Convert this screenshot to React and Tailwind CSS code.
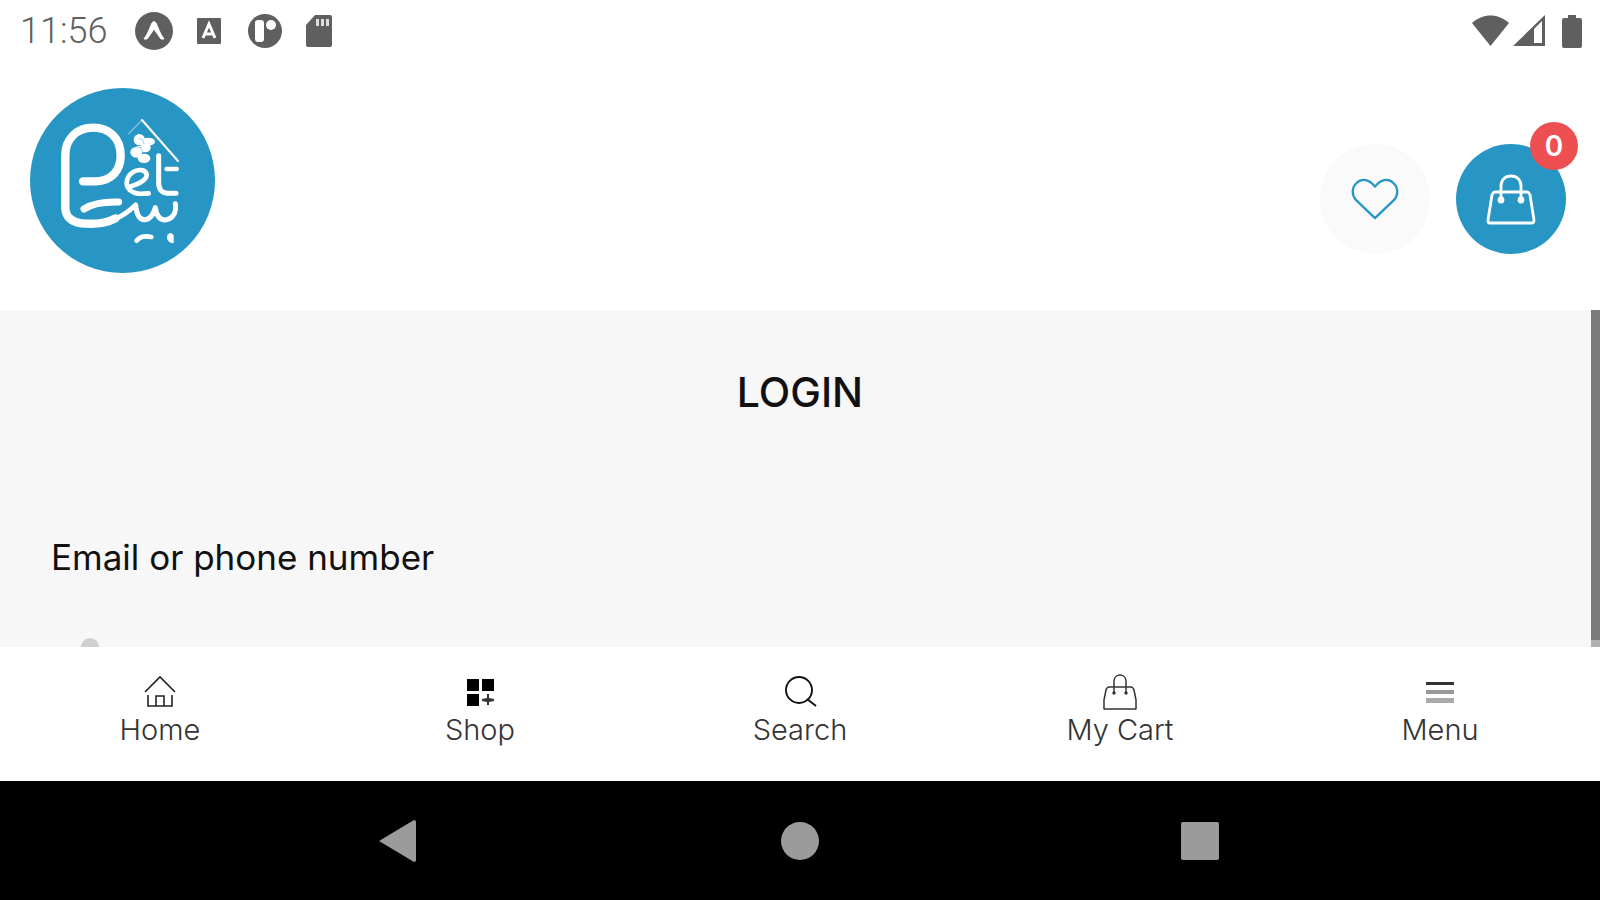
import { useState } from "react";

const PetLogo = () => (
  <svg viewBox="28 25 555 555" className="size-[185px]" fill="none" stroke="#fff" strokeLinecap="round" strokeLinejoin="round" role="img" aria-label="Pet Bait">
    <circle cx="305.5" cy="302.5" r="277.5" fill="#2896c4" stroke="none" />
    <path
      d="M187 305 H226 C272 304 300 272 300 228 C300 176 266 144 218 144 C166 144 134 180 134 226 V384 C134 414 158 432 196 432 C236 434 262 428 284 416"
      strokeWidth="25"
    />
    <path d="M278 420 C306 410 326 394 345 376 C347 398 354 420 371 420 C390 420 398 404 404 384 C407 404 414 421 433 421 C456 418 468 400 464 372" strokeWidth="15" />
    <path d="M190 388 C220 368 258 366 294 367" strokeWidth="21" />
    <path d="M326 322 C352 314 380 300 378 284 C374 268 350 268 336 278 C316 292 312 316 328 332 C342 344 360 343 384 341" strokeWidth="14" />
    <path d="M414 228 V310 C414 330 424 341 442 341 H466" strokeWidth="15" />
    <path d="M438 268 H468" strokeWidth="14" />
    <path d="M324 162 L364 121" strokeWidth="4" opacity="0.4" />
    <path d="M364 121 L472 244" strokeWidth="6" />
    <g fill="#fff" stroke="none">
      <circle cx="356" cy="180" r="17" />
      <ellipse cx="382" cy="186" rx="21" ry="12" />
      <ellipse cx="374" cy="204" rx="16" ry="14" />
      <ellipse cx="346" cy="218" rx="17" ry="16" />
      <ellipse cx="370" cy="236" rx="19" ry="14" />
      <circle cx="356" cy="210" r="12" />
    </g>
    <path d="M354 176 L366 180 L370 192 M350 202 L362 204 L366 218" stroke="#a5d3e6" strokeWidth="3" />
    <path d="M348 483 C358 470 374 468 392 472" strokeWidth="14" />
    <path d="M440 466 C448 456 462 462 459 474 V491 C446 490 436 482 440 466 Z" fill="#fff" stroke="none" />
  </svg>
);

const HeartIcon = () => (
  <svg viewBox="0 0 50 44" className="h-[42px] w-12" fill="none" stroke="#2896c4" strokeWidth="2.4" strokeLinejoin="round">
    <path d="M25 42 L5 23 C0 17 1 9 6 5 C11 0 19 1 25 9 C31 1 39 0 44 5 C49 9 50 17 45 23 Z" />
  </svg>
);

const CartBagIcon = () => (
  <svg viewBox="0 0 52 52" className="size-[52px]" fill="none" stroke="#fff" strokeWidth="2.8" strokeLinecap="round" strokeLinejoin="round">
    <path d="M10 19 H42 C44 19 44 20 45 22 L49 47 C49 49 49 50 47 50 H5 C3 50 3 49 3 47 L7 22 C8 20 8 19 10 19 Z" />
    <path d="M16 26 V13 C16 7 20 3 26 3 C32 3 36 7 36 13 V26" />
    <circle cx="16" cy="27" r="2" fill="#fff" />
    <circle cx="36" cy="27" r="2" fill="#fff" />
  </svg>
);

const HomeIcon = () => (
  <svg viewBox="0 0 36 36" className="size-9" fill="none" stroke="#222" strokeWidth="1.6">
    <path d="M3 18 L18 3 L33 18" />
    <path d="M6 21 V32 H30 V21" />
    <path d="M14 32 V22 H22 V32" />
  </svg>
);

const ShopIcon = () => (
  <svg viewBox="0 0 36 36" className="size-9" fill="#000">
    <rect x="5" y="5" width="12" height="12" />
    <rect x="20" y="5" width="12" height="12" />
    <rect x="5" y="20" width="12" height="12" />
    <path d="M25 20 H27 V24 L32 25 V27 L27 28 V31 H25 V28 L20 27 V25 L25 24 Z" fill="#333" />
  </svg>
);

const SearchIcon = () => (
  <svg viewBox="0 0 36 36" className="size-9" fill="none" stroke="#111" strokeWidth="1.9">
    <circle cx="17" cy="16" r="13" />
    <path d="M25 25 L34 32" />
  </svg>
);

const BagIcon = () => (
  <svg viewBox="0 0 36 36" className="size-9" fill="none" stroke="#333" strokeWidth="1.5">
    <path d="M7 13 H29 Q31 13 32 16 L34 26 V35 H2 V26 L4 16 Q5 13 7 13 Z" strokeLinejoin="round" />
    <path d="M12 20 V7 C12 3 15 1 18 1 C21 1 24 3 24 7 V20" />
    <circle cx="12" cy="19" r="1" fill="#111" />
    <circle cx="24" cy="19" r="1" fill="#111" />
  </svg>
);

const MenuIcon = () => (
  <svg viewBox="0 0 36 36" className="size-9">
    <rect x="4" y="8" width="28" height="3" fill="#333" />
    <rect x="4" y="16" width="28" height="4" fill="#999" />
    <rect x="4" y="24" width="28" height="5" fill="#aaa" />
  </svg>
);

const TABS = [
  { label: "Home", Icon: HomeIcon },
  { label: "Shop", Icon: ShopIcon },
  { label: "Search", Icon: SearchIcon },
  { label: "My Cart", Icon: BagIcon },
  { label: "Menu", Icon: MenuIcon }
];

const StatusBar = () => (
  <div className="flex h-[62px] shrink-0 items-center justify-between pr-[18px] pl-5 text-[#5f5f5f]">
    <div className="flex items-center">
      <span className="w-[115px] font-[Roboto,sans-serif] text-[36px] leading-10 font-light">11:56</span>
      <svg viewBox="0 0 38 38" className="size-[38px]">
        <circle cx="19" cy="19" r="19" fill="currentColor" />
        <path d="M9 27 C13 22 15 15 17 11 Q19 8 21 11 C23 15 25 22 29 27 L26 27 Q23 23 19 17 Q15 23 12 27 Z" fill="#fff" stroke="#fff" strokeWidth="1" strokeLinejoin="round" />
      </svg>
      <svg viewBox="0 0 24 26" className="ml-6 h-[26px] w-6">
        <rect width="24" height="26" rx="1" fill="currentColor" />
        <path d="M6 20 L12 6 L18 20 M8 16 H16" fill="none" stroke="#fff" strokeWidth="3" />
      </svg>
      <svg viewBox="0 0 34 34" className="ml-[27px] size-[34px]">
        <circle cx="17" cy="17" r="17" fill="currentColor" />
        <rect x="7" y="6" width="9" height="22" rx="3" fill="#fff" />
        <circle cx="23" cy="11" r="5" fill="#fff" />
      </svg>
      <svg viewBox="0 0 26 32" className="ml-6 h-8 w-[26px]">
        <path d="M9 0 H24 Q26 0 26 2 V30 Q26 32 24 32 H2 Q0 32 0 30 V10 Z" fill="currentColor" />
        <path d="M10 4 H13 V11 H10 Z M15 4 H18 V11 H15 Z M20 4 H23 V11 H20 Z" fill="#ddd" />
      </svg>
    </div>
    <div className="flex items-center">
      <svg viewBox="0 0 37 32" className="h-8 w-[37px]">
        <path d="M0 8 C11 -2 26 -2 37 8 L18.5 31 Z" fill="currentColor" />
      </svg>
      <svg viewBox="0 0 32 32" className="ml-1 h-8 w-8">
        <path d="M0 31 L32 0 V31 Z M21 14 V28 H29 V6 Z" fill="currentColor" fillRule="evenodd" />
      </svg>
      <svg viewBox="0 0 20 33" className="ml-[17px] h-[33px] w-5">
        <path d="M6 0 H14 V3 H18 Q20 3 20 5 V31 Q20 33 18 33 H2 Q0 33 0 31 V5 Q0 3 2 3 H6 Z" fill="currentColor" />
      </svg>
    </div>
  </div>
);

const Header = () => (
  <header className="flex h-[248px] shrink-0 items-start justify-between pt-[26px] pr-[34px] pl-[30px]">
    <a href="#home">
      <PetLogo />
    </a>
    <div className="flex gap-[26px] pt-14">
      <button aria-label="Wishlist" className="flex size-[110px] items-center justify-center rounded-full bg-[#fafafa]">
        <HeartIcon />
      </button>
      <button aria-label="Cart" className="relative flex size-[110px] items-center justify-center rounded-full bg-[#2896c4]">
        <CartBagIcon />
        <span className="absolute -top-[22px] -right-3 flex size-12 items-center justify-center rounded-full bg-[#ee4f50] text-[28px] leading-8 font-semibold text-white">
          0
        </span>
      </button>
    </div>
  </header>
);

const LoginForm = () => {
  const [login, setLogin] = useState("");

  return (
    <main className="relative min-h-0 flex-1 overflow-hidden bg-[#f7f7f7] px-[51px] pt-[58px]">
      <h1 className="text-center text-[41px] leading-12 font-medium text-[#111]">LOGIN</h1>
      <form className="mt-[121px]">
        <label htmlFor="login" className="block text-[35px] leading-10 text-[#111]">
          Email or phone number
        </label>
        <div className="mt-[61px] flex items-start gap-6 pl-[23px]">
          <svg viewBox="0 0 32 36" className="h-9 w-8" fill="#d0d0d0">
            <circle cx="16" cy="9" r="9" />
            <path d="M0 36 C0 24 6 20 16 20 C26 20 32 24 32 36 Z" />
          </svg>
          <input
            id="login"
            type="text"
            value={login}
            onChange={(event) => setLogin(event.target.value)}
            className="h-9 flex-1 bg-transparent text-[29px] outline-none"
          />
        </div>
      </form>
      <div className="absolute inset-y-0 right-0 w-[9px] bg-[#b0b0b0]">
        <div className="h-[98%] bg-[#7a7a7a]" />
      </div>
    </main>
  );
};

const TabBar = () => (
  <nav className="grid h-[134px] shrink-0 grid-cols-5 items-start bg-white pt-[27px]">
    {TABS.map(({ label, Icon }) => (
      <button key={label} className="flex flex-col items-center text-[29px] leading-10 font-light text-[#333]">
        <Icon />
        {label}
      </button>
    ))}
  </nav>
);

const SystemNav = () => (
  <div className="grid h-[119px] shrink-0 grid-cols-3 items-center justify-items-center bg-black px-[12.5%] text-[#9b9b9b]">
    <button aria-label="Back">
      <svg viewBox="0 0 42 42" className="size-[42px]" fill="currentColor">
        <path d="M0 21 L35 0 Q37 0 37 2 V40 Q37 42 35 42 Z" />
      </svg>
    </button>
    <button aria-label="Home screen" className="size-[38px] rounded-full bg-current" />
    <button aria-label="Recent apps" className="size-[38px] rounded-xs bg-current" />
  </div>
);

const App = () => (
  <div className="flex h-screen flex-col overflow-hidden bg-white font-[Inter,sans-serif]">
    <StatusBar />
    <Header />
    <LoginForm />
    <TabBar />
    <SystemNav />
  </div>
);

export default App;
